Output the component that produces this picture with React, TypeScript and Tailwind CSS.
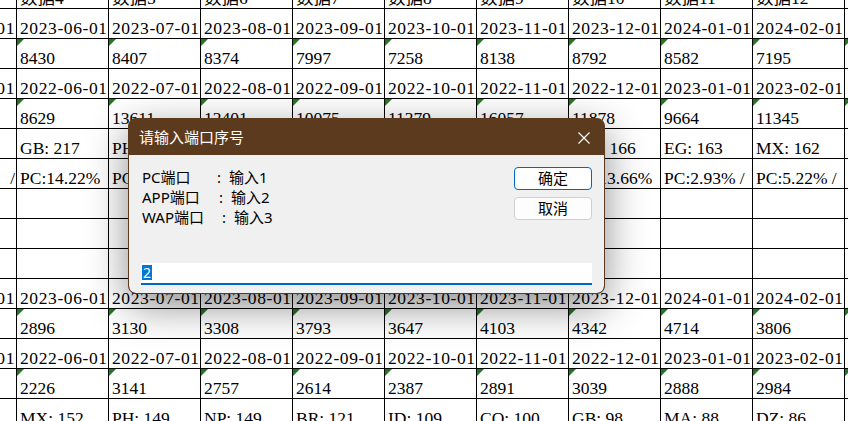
type Kind = "head" | "date" | "num" | "txt" | "pct" | "empty";

const heads = ["", "数据4", "数据5", "数据6", "数据7", "数据8", "数据9", "数据10", "数据11", "数据12", "数据13"];
const d23 = ["2023-05-01", "2023-06-01", "2023-07-01", "2023-08-01", "2023-09-01", "2023-10-01", "2023-11-01", "2023-12-01", "2024-01-01", "2024-02-01", "2024-03-01"];
const d22 = ["2022-05-01", "2022-06-01", "2022-07-01", "2022-08-01", "2022-09-01", "2022-10-01", "2022-11-01", "2022-12-01", "2023-01-01", "2023-02-01", "2023-03-01"];
const blank = Array(11).fill("");

const rows: { kind: Kind; cells: string[] }[] = [
  { kind: "head", cells: heads },
  { kind: "date", cells: d23 },
  { kind: "num", cells: ["", "8430", "8407", "8374", "7997", "7258", "8138", "8792", "8582", "7195", "7702"] },
  { kind: "date", cells: d22 },
  { kind: "num", cells: ["", "8629", "13611", "12401", "10075", "11379", "16057", "11878", "9664", "11345", "10420"] },
  { kind: "txt", cells: ["", "GB: 217", "PH: 205", "NP: 198", "BR: 187", "ID: 181", "CO: 172", "MA: 166", "EG: 163", "MX: 162", "DZ: 160"] },
  { kind: "pct", cells: ["/", "PC:14.22%", "PC:12.08%", "PC:9.41%", "PC:8.75%", "PC:7.36%", "PC:6.12%", "PC:13.66%", "PC:2.93% /", "PC:5.22% /", "PC:4.10%"] },
  { kind: "empty", cells: blank },
  { kind: "empty", cells: blank },
  { kind: "empty", cells: blank },
  { kind: "date", cells: d23 },
  { kind: "num", cells: ["", "2896", "3130", "3308", "3793", "3647", "4103", "4342", "4714", "3806", "3520"] },
  { kind: "date", cells: d22 },
  { kind: "num", cells: ["", "2226", "3141", "2757", "2614", "2387", "2891", "3039", "2888", "2984", "2710"] },
  { kind: "txt", cells: ["", "MX: 152", "PH: 149", "NP: 149", "BR: 121", "ID: 109", "CO: 100", "GB: 98", "MA: 88", "DZ: 86", "EG: 80"] },
];

function Cell({ text, kind, edge }: { text: string; kind: Kind; edge: boolean }) {
  return (
    <div
      className={
        "relative flex h-[30px] w-[92px] shrink-0 items-end overflow-hidden whitespace-pre border-b border-r border-black " +
        (edge ? "justify-end pr-[1px]" : "pl-[3px]") +
        (kind === "date" ? " tracking-[0.6px]" : "")
      }
    >
      {kind === "num" && (
        <div className="absolute left-0 top-0 h-0 w-0 border-r-[7px] border-t-[7px] border-r-transparent border-t-[#1f7a1f]" />
      )}
      <span>{text}</span>
    </div>
  );
}

function Dialog() {
  return (
    <div className="absolute left-[128px] top-[118px] flex h-[176px] w-[477px] flex-col overflow-hidden rounded-[8px] border border-[#5b3a1e] bg-[#5b3a1e] font-['Noto_Sans','Noto_Sans_CJK_SC',sans-serif] shadow-[0_12px_40px_rgba(0,0,0,0.45)]">
      <div className="flex h-[36px] shrink-0 items-center justify-between pl-[10px] pr-[14px] text-[15px] text-white">
        <span>请输入端口序号</span>
        <svg width="12" height="12" viewBox="0 0 12 12" className="mt-[1px]">
          <path d="M0.5 0.5 L11.5 11.5 M11.5 0.5 L0.5 11.5" stroke="#ffffff" strokeWidth="1.2" fill="none" />
        </svg>
      </div>
      <div className="flex flex-1 flex-col rounded-b-[7px] bg-[#f0f0f0] px-[12px] pb-[8px] pt-[12px] text-[15px] text-black">
        <div className="flex justify-between">
          <div className="ml-[1px] flex flex-col leading-[20px]">
            <div className="flex">
              <span className="w-[75px] shrink-0">PC端口</span>
              <span className="w-[12px] shrink-0">:</span>
              <span>输入1</span>
            </div>
            <div className="flex">
              <span className="w-[77px] shrink-0">APP端口</span>
              <span className="w-[12px] shrink-0">:</span>
              <span>输入2</span>
            </div>
            <div className="flex">
              <span className="w-[80px] shrink-0">WAP端口</span>
              <span className="w-[12px] shrink-0">:</span>
              <span>输入3</span>
            </div>
          </div>
          <div className="flex w-[78px] flex-col gap-[7px]">
            <div className="flex h-[23px] items-center justify-center rounded-[4px] border border-[#0067c0] bg-white leading-none">确定</div>
            <div className="flex h-[23px] items-center justify-center rounded-[4px] border border-[#d0d0d0] bg-[#fdfdfd] leading-none">取消</div>
          </div>
        </div>
        <div className="mt-auto flex h-[22px] items-start border-b-2 border-[#0067c0] bg-white pl-[1px] pt-[2px]">
          <span className="flex h-[15px] w-[10px] items-center justify-center bg-[#0078d7] text-[14px] leading-none text-white">2</span>
        </div>
      </div>
    </div>
  );
}

export default function App() {
  return (
    <div className="relative h-[421px] w-[848px] overflow-hidden bg-white text-black">
      <div className="-ml-[75px] -mt-[21px] flex flex-col font-['Liberation_Serif','Noto_Sans_CJK_SC',serif] text-[17.5px] leading-[20px]">
        {rows.map((row, i) => (
          <div key={i} className="flex h-[30px]">
            {row.cells.map((c, j) => (
              <Cell key={j} text={c} kind={row.kind} edge={j === 0} />
            ))}
          </div>
        ))}
      </div>
      <Dialog />
    </div>
  );
}
